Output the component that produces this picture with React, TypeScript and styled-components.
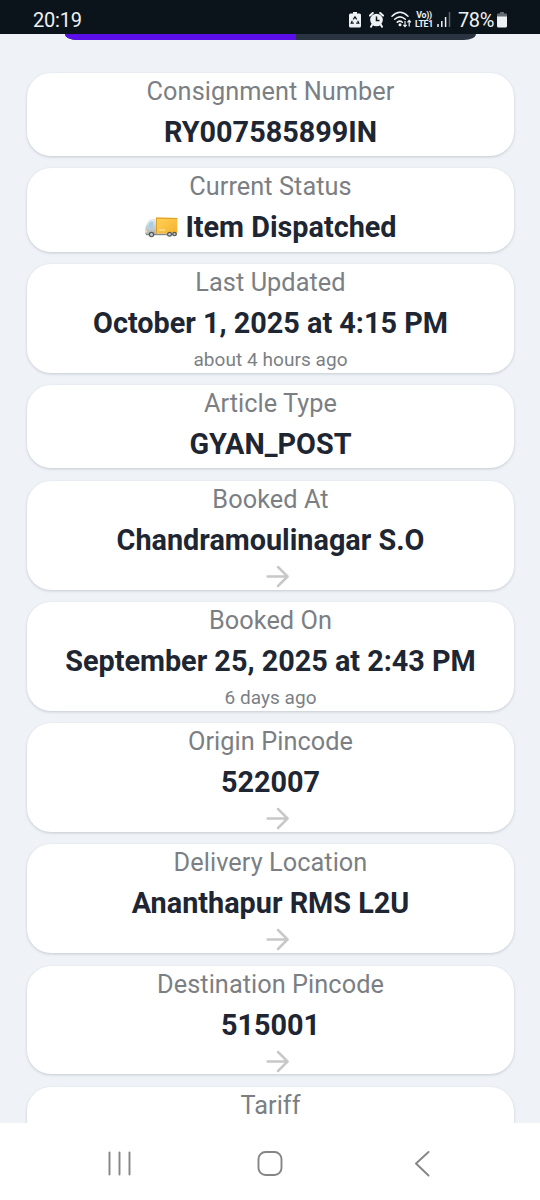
import React from "react";
import styled, { createGlobalStyle } from "styled-components";

const GlobalStyle = createGlobalStyle`
  * { box-sizing: border-box; }
  body { margin: 0; background: #eff3f8; font-family: Roboto, sans-serif; }
`;

const Screen = styled.div`
  width: 540px;
  height: 1200px;
  display: flex;
  flex-direction: column;
  overflow: hidden;
  background: #eff3f8;
`;

const StatusBar = styled.header`
  flex: none;
  height: 34px;
  padding: 5px 33px 0 33px;
  display: flex;
  align-items: center;
  justify-content: space-between;
  background: #0c141b;
  color: #eef1f3;
`;

const Clock = styled.span`
  font-size: 20px;
  line-height: 28px;
  letter-spacing: -0.2px;
`;

const StatusIcons = styled.div`
  display: flex;
  align-items: center;
  height: 28px;
`;

const StatusSvg = styled.svg<{ $gap?: number }>`
  display: block;
  flex: none;
  margin-right: ${(p) => p.$gap ?? 0}px;
`;

const Network = styled.div`
  width: 20px;
  margin-right: 3px;
  display: flex;
  flex-direction: column;
  align-items: center;
  font-size: 8.8px;
  font-weight: 700;
  line-height: 9px;
  letter-spacing: -0.3px;
  white-space: nowrap;
`;

const Percent = styled.span`
  font-size: 20px;
  line-height: 28px;
  width: 36px;
  margin-right: 3px;
  letter-spacing: -0.4px;
  white-space: nowrap;
`;

const Content = styled.main`
  flex: 1;
  min-height: 0;
  overflow: hidden;
  display: flex;
  flex-direction: column;
  padding: 0 26px 0 27px;
`;

const SegmentedEdge = styled.div`
  flex: none;
  align-self: center;
  width: 411px;
  height: 6px;
  margin-bottom: 32.9px;
  margin-left: -1px;
  display: flex;
  overflow: hidden;
  border-radius: 0 0 12px 12px / 0 0 6px 6px;
  background: #2a3440;
`;

const SelectedSegment = styled.div`
  width: 231px;
  background: #5a0ee8;
`;

const CardList = styled.div`
  flex: none;
  display: flex;
  flex-direction: column;
  gap: 12.5px;
`;

const Card = styled.section<{ $tall: boolean }>`
  height: ${(p) => (p.$tall ? 108.7 : 83.1)}px;
  border-radius: 24px;
  background: #fff;
  box-shadow: 0 1px 3px rgba(30, 40, 60, 0.2);
  display: flex;
  flex-direction: column;
  align-items: center;
  white-space: nowrap;
`;

const Label = styled.div`
  height: 37px;
  line-height: 38px;
  font-size: 25.3px;
  letter-spacing: 0.06px;
  color: #7b7f84;
`;

const Value = styled.div`
  height: 44px;
  line-height: 44px;
  font-size: 28.8px;
  font-weight: 700;
  color: #1d2632;
  display: flex;
  align-items: center;
  gap: 7px;
`;

const Extra = styled.div`
  height: 25px;
  margin-top: 1.6px;
  line-height: 25px;
  font-size: 19px;
  letter-spacing: 0.05px;
  color: #7b7f84;
`;

const ArrowRow = styled.div`
  height: 26px;
  padding: 2px 0 0 15px;
`;

const NavBar = styled.nav`
  flex: none;
  height: 77px;
  background: #fff;
  padding: 5px 106px 0;
  display: flex;
  align-items: center;
  justify-content: space-between;
`;

const NavSvg = styled.svg`
  display: block;
  fill: none;
  stroke: #858585;
  stroke-width: 1.9;
  stroke-linecap: round;
  stroke-linejoin: round;
`;

const Truck = () => (
  <svg width="34" height="24" viewBox="0 0 34 24">
    <defs>
      <linearGradient id="box" x1="0" y1="0" x2="1" y2="1">
        <stop offset="0" stopColor="#ffd35a" />
        <stop offset="1" stopColor="#f6b02c" />
      </linearGradient>
      <linearGradient id="cab" x1="0" y1="0" x2="0" y2="1">
        <stop offset="0" stopColor="#e8eff3" />
        <stop offset="1" stopColor="#aeb6bc" />
      </linearGradient>
    </defs>
    <path d="M2 18.500h31v1.700H2z" fill="#85888a" />
    <path d="M12 4H7.300Q5.300 4 4.300 6L1.500 12 1 19h11z" fill="url(#cab)" />
    <path d="M9.500 6.500H7Q5.900 6.500 5.300 8L3.800 12.500l5.200.500z" fill="#a9cfe6" />
    <path d="M12 2.500 33.300 3V18.500H12z" fill="url(#box)" />
    <path d="M12 2.500 33.300 3v1L13 3.700V18.500h-1z" fill="#dfa02a" />
    <path d="M15 14.500h6v1h-6z" fill="#fff0b4" />
    <path d="M1 15.500h2v2H1z" fill="#f7e3a0" />
    <g fill="#55595c">
      <circle cx="7.500" cy="19.500" r="2.800" />
      <circle cx="25.500" cy="19.300" r="2.500" />
      <circle cx="30.500" cy="19" r="2.300" />
    </g>
    <g fill="#c9cdd0">
      <circle cx="7.500" cy="19.500" r="1.500" />
      <circle cx="25.500" cy="19.300" r="1.200" />
      <circle cx="30.500" cy="19" r="1.100" />
    </g>
  </svg>
);

const Arrow = () => (
  <svg width="24" height="24" viewBox="0 0 24 24" fill="none" stroke="#c8c8c8" strokeWidth="2.5" strokeLinecap="round" strokeLinejoin="round">
    <path d="M1.600 12.500h19.600M12 3l9.600 9.500-9.600 9.500" />
  </svg>
);

type Item = {
  label: string;
  value?: string;
  truck?: boolean;
  note?: string;
  arrow?: boolean;
};

const items: Item[] = [
  { label: "Consignment Number", value: "RY007585899IN" },
  { label: "Current Status", value: "Item Dispatched", truck: true },
  { label: "Last Updated", value: "October 1, 2025 at 4:15 PM", note: "about 4 hours ago" },
  { label: "Article Type", value: "GYAN_POST" },
  { label: "Booked At", value: "Chandramoulinagar S.O", arrow: true },
  { label: "Booked On", value: "September 25, 2025 at 2:43 PM", note: "6 days ago" },
  { label: "Origin Pincode", value: "522007", arrow: true },
  { label: "Delivery Location", value: "Ananthapur RMS L2U", arrow: true },
  { label: "Destination Pincode", value: "515001", arrow: true },
  { label: "Tariff" },
];

const DetailCard = ({ item }: { item: Item }) => (
  <Card $tall={Boolean(item.note || item.arrow)}>
    <Label>{item.label}</Label>
    {item.value && (
      <Value>
        {item.truck && <Truck />}
        <span>{item.value}</span>
      </Value>
    )}
    {item.note && <Extra>{item.note}</Extra>}
    {item.arrow && (
      <ArrowRow>
        <Arrow />
      </ArrowRow>
    )}
  </Card>
);

export default function App() {
  return (
    <Screen>
      <GlobalStyle />
      <StatusBar>
        <Clock>20:19</Clock>
        <StatusIcons>
          <StatusSvg $gap={8} width="12" height="16" viewBox="0 0 12 16">
            <path d="M4 0h4v1.500h2.500Q12 1.500 12 3v11q0 1.500-1.500 1.500h-9Q0 15.500 0 14V3q0-1.500 1.500-1.500H4z" fill="#eef1f3" />
            <path d="M4.300 7.300 6 4.800l1.700 2.500M8.700 8.800l1.100 2.400H7.200M4.800 11.200H2.200l1.100-2.400" fill="none" stroke="#0c141b" strokeWidth="1.200" />
          </StatusSvg>
          <StatusSvg $gap={7} width="15" height="16" viewBox="0 0 15 16">
            <circle cx="7.500" cy="8" r="6.300" fill="#eef1f3" />
            <path d="M1 3.600 3.800 1M14 3.600 11.200 1M3.300 12.500 2 14.700M11.700 12.500l1.300 2.200" stroke="#eef1f3" strokeWidth="2" strokeLinecap="round" />
            <path d="M7.500 4.500v4h3" fill="none" stroke="#0c141b" strokeWidth="1.500" />
          </StatusSvg>
          <StatusSvg $gap={2} width="21" height="17" viewBox="0 0 21 17">
            <g fill="none" stroke="#eef1f3" strokeWidth="1.500" strokeLinecap="round">
              <path d="M1 5.200Q9 -2.600 17 5.200M3.700 8.300q5.300-4.800 10.600 0M6.300 11.200q2.700-2.200 5 0" />
            </g>
            <circle cx="9" cy="13.700" r="1.500" fill="#eef1f3" />
            <path d="M14 10v5.500M12.300 13.900l1.700 1.800 1.700-1.800M18.200 15.500v-6M16.500 11.300l1.700-1.900 1.700 1.900" fill="none" stroke="#eef1f3" strokeWidth="1.200" />
          </StatusSvg>
          <Network>
            <span>Vo))</span>
            <span>LTE1</span>
          </Network>
          <StatusSvg $gap={7} width="14" height="15" viewBox="0 0 14 15">
            <path d="M1 12v3M4.800 9v6M8.600 5v10" stroke="#eef1f3" strokeWidth="1.500" />
            <path d="M12.500 0v15" stroke="#59616a" strokeWidth="1.500" />
          </StatusSvg>
          <Percent>78%</Percent>
          <StatusSvg width="10" height="16" viewBox="0 0 10 16">
            <path d="M3 0h4v1.500h2q1 0 1 1V5H0V2.500q0-1 1-1h2z" fill="#646b71" />
            <path d="M0 4.500h10V14q0 1.500-1.500 1.500h-7Q0 15.500 0 14z" fill="#eef1f3" />
          </StatusSvg>
        </StatusIcons>
      </StatusBar>
      <Content>
        <SegmentedEdge>
          <SelectedSegment />
        </SegmentedEdge>
        <CardList>
          {items.map((item) => (
            <DetailCard key={item.label} item={item} />
          ))}
        </CardList>
      </Content>
      <NavBar>
        <NavSvg width="26" height="26" viewBox="0 0 26 26">
          <path d="M3.500 1.500v22M13.500 1.500v22M23.500 1.500v22" />
        </NavSvg>
        <NavSvg width="26" height="26" viewBox="0 0 26 26">
          <rect x="1.500" y="1" width="23" height="23" rx="7" />
        </NavSvg>
        <NavSvg width="26" height="26" viewBox="0 0 26 26">
          <path d="M20.500 1 8 12.500 20.500 24.500" />
        </NavSvg>
      </NavBar>
    </Screen>
  );
}
